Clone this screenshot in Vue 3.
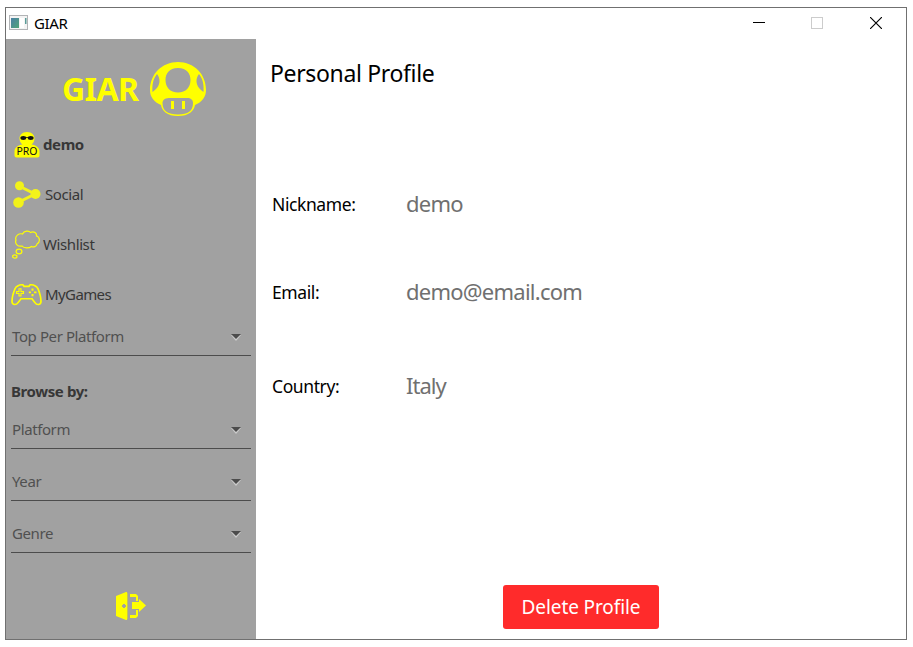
<script setup>
const links = [
  { id: 'demo', label: 'demo' },
  { id: 'social', label: 'Social' },
  { id: 'wishlist', label: 'Wishlist' },
  { id: 'games', label: 'MyGames' },
]
const filters = ['Platform', 'Year', 'Genre']
const fields = [
  { id: 'nickname', label: 'Nickname:', value: 'demo' },
  { id: 'email', label: 'Email:', value: 'demo@email.com' },
  { id: 'country', label: 'Country:', value: 'Italy' },
]
</script>

<template>
  <div class="window">
    <header class="titlebar">
      <svg class="app-icon" width="20" height="17" viewBox="0 0 20 17">
        <defs>
          <linearGradient id="pane" x1="0" y1="0" x2="1" y2="1">
            <stop offset="0" stop-color="#4a7fa5" />
            <stop offset="1" stop-color="#4fa577" />
          </linearGradient>
        </defs>
        <rect x="0.5" y="0.5" width="18" height="14" fill="#f4f4f4" stroke="#b2b4b6" />
        <rect x="2" y="3" width="8" height="10" fill="url(#pane)" />
        <rect x="11" y="3" width="4" height="10" fill="#fff" />
        <rect x="16" y="3" width="1.500" height="6" fill="#5c9c98" />
      </svg>
      <span class="title">GIAR</span>
      <div class="controls">
        <svg width="12" height="12" viewBox="0 0 12 12"><path d="M0 5.500H12" stroke="#000" /></svg>
        <svg width="12" height="12" viewBox="0 0 12 12"><rect x="0.5" y="0.5" width="11" height="11" fill="none" stroke="#ccc" /></svg>
        <svg class="close" width="12" height="12" viewBox="0 0 12 12"><path d="M0 0L12 12M12 0L0 12" stroke="#000" stroke-width="1.150" /></svg>
      </div>
    </header>

    <div class="body">
      <aside class="sidebar">
        <div class="brand">
          <span class="brand-name">GIAR</span>
          <svg width="58" height="56" viewBox="0 0 58 56">
            <path fill="#ff0" fill-rule="evenodd" d="M29 1C45 1 57 13 57 29C57 36 53 41 46 44C45 50 40 55 29 55C18 55 13 50 12 44C5 41 1 36 1 29C1 13 13 1 29 1ZM29 7C20 7 16.500 13 16.500 19C16.500 26 21 31.500 29 31.500C37 31.500 41.500 26 41.500 19C41.500 13 38 7 29 7ZM8 13C4 18 3 24 3.500 31C8 28 10.500 24 10.500 20C10.500 17 9.500 15 8 13ZM50 13C48.500 15 47.500 17 47.500 20C47.500 24 50 28 54.500 31C55 24 54 18 50 13ZM20 37C15 37 13.500 40 13.500 42C13.500 50 19 53.500 29 53.500C39 53.500 44 50 44 42C44 39 42 37 38 37Z" />
            <rect x="22" y="40" width="3" height="8" fill="#ff0" />
            <rect x="33" y="40" width="3" height="8" fill="#ff0" />
          </svg>
        </div>

        <nav class="links">
          <a v-for="link in links" :key="link.id" class="link" :class="link.id">
            <svg v-if="link.id === 'demo'" width="26" height="28" viewBox="0 -2 26 28">
              <path fill="#ff0" d="M13 0C18 0 20.500 3 20.500 6.500C20.500 9.500 19 11.500 17.500 12.500C22 13 25.500 16 25.500 19V23.500Q25.500 25.500 23.500 25.500H2.500Q.5 25.500 .5 23.500V19C.5 16 4 13 8.500 12.500C7 11.500 5.500 9.500 5.500 6.500C5.500 3 8 0 13 0Z" />
              <ellipse cx="9.300" cy="6" rx="2.900" ry="1.900" fill="#111" />
              <ellipse cx="16.700" cy="6" rx="2.900" ry="1.900" fill="#111" />
              <path d="M7 5.500H19" stroke="#111" stroke-width=".8" />
              <text x="13" y="23" text-anchor="middle" textLength="21" lengthAdjust="spacingAndGlyphs" class="pro">PRO</text>
            </svg>
            <svg v-else-if="link.id === 'social'" width="28" height="27" viewBox="0 0 28 27">
              <path d="M6 5L22 13L6 21" fill="none" stroke="#f2f21a" stroke-width="3" />
              <circle cx="6.500" cy="4.800" r="4.500" fill="#f2f21a" />
              <circle cx="22.500" cy="13" r="5" fill="#f2f21a" />
              <circle cx="5.500" cy="21.500" r="5.300" fill="#f2f21a" />
            </svg>
            <svg v-else-if="link.id === 'wishlist'" width="28" height="29" viewBox="0 0 28 29" fill="none" stroke="#ff0" stroke-width="1.200">
              <path d="M10 16C6 17 2.500 14 4 10C2.500 6 7 3 10.500 4C12 .5 17 .5 18.500 2.500C22 1 25 3 24.500 6C28 7 28.500 12 25 14C25 16.500 21 17.500 19.500 16.500C17 18.500 12 18.500 10 16Z" />
              <ellipse cx="7" cy="21.500" rx="2.900" ry="2.300" />
              <ellipse cx="2.800" cy="26.500" rx="2.200" ry="1.600" />
            </svg>
            <svg v-else width="31" height="24" viewBox="0 -2 31 25" preserveAspectRatio="none" fill="none" stroke="#ff0" stroke-width="1.700">
              <path d="M7 2Q9 .5 12 1L13 2.500H18L19 1Q22 .5 24 2Q26 2.500 27 5C29 10 30 14 30 18C30 22 26 22.500 24 19.500L21 15.500H10L7 19.500C5 22.500 1 22 1 18C1 14 2 10 4 5Q5 2.500 7 2Z" />
              <path d="M8 5V8H5.500V10H8V12.500H10V10H12.500V8H10V5Z" stroke-width="1.100" />
              <path d="M21.500 4.800V7M21.500 10.500V12.800M17.800 8.800H20M23 8.800H25.500" stroke-width="2" />
            </svg>
            <span class="link-label">{{ link.label }}</span>
          </a>
        </nav>

        <div class="select top">
          <span class="select-label">Top Per Platform</span>
          <svg width="10" height="7" viewBox="0 0 10 7"><path d="M0 1H10L5 7Z" fill="#ccc" /><path d="M0 0H10L5 5Z" fill="#4c4c4c" /></svg>
        </div>
        <div class="browse">Browse by:</div>
        <div class="filters">
          <div v-for="name in filters" :key="name" class="select">
            <span class="select-label">{{ name }}</span>
            <svg width="10" height="7" viewBox="0 0 10 7"><path d="M0 1H10L5 7Z" fill="#ccc" /><path d="M0 0H10L5 5Z" fill="#4c4c4c" /></svg>
          </div>
        </div>

        <svg class="exit" width="30" height="28" viewBox="0 0 30 28" fill="#ff0">
          <path fill-rule="evenodd" d="M0 4L10 0H11V28H10L0 24ZM7 12V13H6V15H7V16H9V15H10V13H9V12Z" />
          <path d="M11.500 1V27" stroke="#c6c64d" />
          <path d="M14 2H20L22 4V9H20V5H14ZM14 23H20V18H22V24L20 26H14ZM16 10H23V7L30 13.500L23 20V17H16Z" />
        </svg>
      </aside>

      <main class="profile">
        <h1>Personal Profile</h1>
        <dl>
          <div v-for="field in fields" :key="field.id" class="field" :class="field.id">
            <dt>{{ field.label }}</dt>
            <dd>{{ field.value }}</dd>
          </div>
        </dl>
        <button type="button">Delete Profile</button>
      </main>
    </div>
  </div>
</template>

<style>
body {
  background: #fff;
}
</style>

<style scoped>
.window {
  box-sizing: border-box;
  width: 902px;
  height: 633px;
  margin: 7px 0 0 5px;
  border: 1px solid #707070;
  font-family: "Noto Sans", "Open Sans", sans-serif;
  white-space: nowrap;
}
svg {
  display: block;
  flex: none;
}
.titlebar {
  display: flex;
  align-items: center;
  height: 31px;
  padding: 0 24px 0 3px;
}
.title {
  margin-left: 5px;
  padding-bottom: 2px;
  font-size: 15px;
  line-height: 20px;
  letter-spacing: -0.4px;
}
.controls {
  display: flex;
  gap: 46px;
  margin: -1px 0 0 auto;
}
.close {
  margin-left: 1px;
}
.body {
  display: flex;
  height: 600px;
}
.sidebar {
  display: flex;
  flex-direction: column;
  box-sizing: border-box;
  width: 250px;
  padding: 0 5px;
  background: #a1a1a1;
  color: #373737;
}
.brand {
  display: flex;
  align-items: center;
  gap: 11px;
  height: 56px;
  padding: 22px 0 2px 51px;
}
.brand-name {
  color: #ff0;
  font-size: 32px;
  line-height: 40px;
  font-weight: 700;
  letter-spacing: -0.6px;
}
.link {
  display: flex;
  align-items: center;
  height: 50px;
}
.link-label {
  font-size: 15px;
  line-height: 20px;
  letter-spacing: -0.4px;
}
.demo {
  padding-left: 3px;
  gap: 3px;
  font-weight: 700;
}
.social {
  padding-left: 2px;
  gap: 4px;
}
.wishlist {
  padding-left: 1px;
  gap: 3px;
}
.games {
  gap: 3px;
}
.games .link-label {
  letter-spacing: -0.6px;
}
.pro {
  font: 400 11px "Noto Sans", sans-serif;
  fill: #111;
}
.select {
  display: flex;
  align-items: center;
  justify-content: space-between;
  box-sizing: border-box;
  height: 36px;
  padding: 0 10px 0 1px;
  border-bottom: 1px solid #4c4c4c;
  color: #505050;
  font-size: 15px;
  line-height: 20px;
  letter-spacing: -0.4px;
}
.select-label {
  padding-bottom: 3px;
}
.top {
  margin-top: 1px;
}
.browse {
  height: 24px;
  margin-top: 23px;
  font-size: 15px;
  line-height: 24px;
  font-weight: 700;
  letter-spacing: -0.4px;
}
.filters {
  display: flex;
  flex-direction: column;
  gap: 16px;
  margin-top: 10px;
}
.exit {
  margin: 39px 0 0 105px;
}
.profile {
  display: flex;
  flex-direction: column;
  flex: 1;
}
h1 {
  margin: 18px 0 0 14px;
  font-size: 23px;
  line-height: 32px;
  font-weight: 400;
  letter-spacing: -0.35px;
}
dl {
  display: grid;
  grid-template-rows: 88px 94px 32px;
  margin: 98px 0 0 16px;
}
.field {
  display: flex;
  height: 32px;
  line-height: 32px;
}
dt {
  width: 134px;
  padding-top: 1px;
  font-size: 17.5px;
  letter-spacing: -0.4px;
}
dd {
  margin: 0;
  color: #707070;
  font-size: 22px;
  letter-spacing: -0.75px;
}
.country dd {
  letter-spacing: -1px;
}
button {
  width: 156px;
  height: 44px;
  margin: 184px 0 0 247px;
  padding: 0;
  border: 0;
  border-radius: 3px;
  background: #ff2b2b;
  color: #fff;
  font: 400 19px/44px "Noto Sans", "Open Sans", sans-serif;
  letter-spacing: -0.1px;
}
</style>
